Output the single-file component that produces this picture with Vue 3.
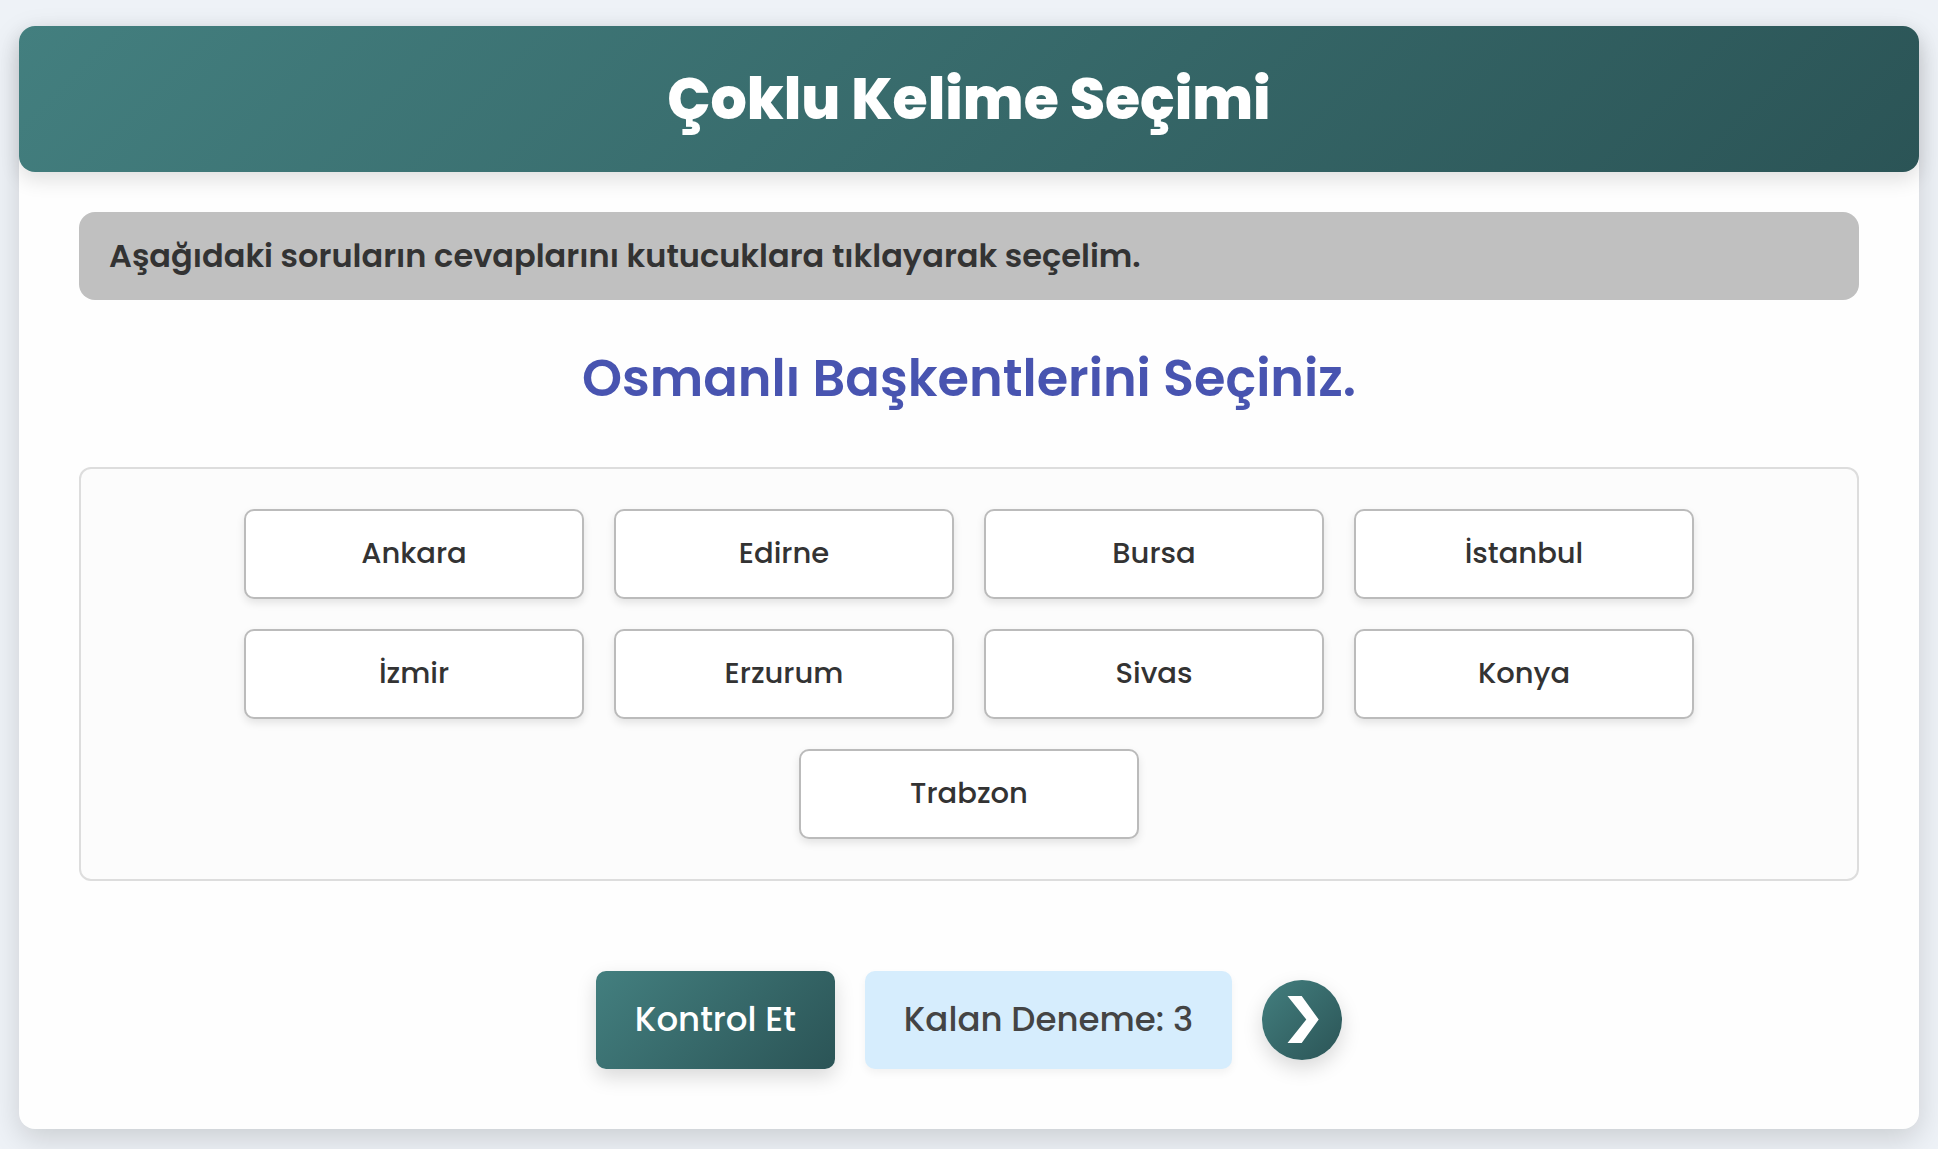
<script setup>
import { ref } from 'vue'

const words = ['Ankara', 'Edirne', 'Bursa', 'İstanbul', 'İzmir', 'Erzurum', 'Sivas', 'Konya', 'Trabzon']
const selected = ref([])
const attempts = ref(3)

function toggle(word) {
  selected.value = selected.value.includes(word)
    ? selected.value.filter((w) => w !== word)
    : [...selected.value, word]
}

function check() {
  if (attempts.value > 0) attempts.value--
}
</script>

<template>
  <main class="card">
    <header class="header">
      <h1>Çoklu Kelime Seçimi</h1>
    </header>
    <div class="content">
      <p class="instruction">Aşağıdaki soruların cevaplarını kutucuklara tıklayarak seçelim.</p>
      <h2>Osmanlı Başkentlerini Seçiniz.</h2>
      <div class="words">
        <button
          v-for="word in words"
          :key="word"
          type="button"
          class="word"
          :class="{ selected: selected.includes(word) }"
          :aria-pressed="selected.includes(word)"
          @click="toggle(word)"
        >{{ word }}</button>
      </div>
      <div class="actions">
        <button type="button" class="check" @click="check">Kontrol Et</button>
        <div class="attempts">Kalan Deneme: {{ attempts }}</div>
        <button type="button" class="next" aria-label="Sonraki">
          <svg viewBox="0 0 80 80" aria-hidden="true">
            <path d="M25.5 16H39.7L56.7 39.5L39.7 63H25.5L44.3 39.5Z" fill="#fff" />
          </svg>
        </button>
      </div>
    </div>
  </main>
</template>

<style>
body {
  margin: 0;
  background: #eef2f7;
}
</style>

<style scoped>
.card,
.card button {
  font-family: Poppins, Inter, "Noto Sans", sans-serif;
}

.card {
  margin: 26px 19px 20px;
  border-radius: 16px;
  background: #fefefe;
  color: #333;
  box-shadow: 0 10px 30px rgba(0, 0, 0, 0.15);
}

.header {
  padding: 32px;
  border-radius: 16px;
  background: linear-gradient(135deg, #437f7f, #2b5456);
  box-shadow: 0 8px 20px rgba(0, 0, 0, 0.12);
  color: #fff;
  text-align: center;
}

h1 {
  margin: 0;
  font-size: 57px;
  font-weight: 800;
  line-height: 82px;
}

.content {
  padding: 40px 60px 60px;
}

.instruction {
  margin: 0;
  padding: 20px 30px;
  border-radius: 16px;
  background: #c0c0c0;
  font-size: 32px;
  font-weight: 600;
  line-height: 48px;
}

h2 {
  margin: 40px 0 51px;
  color: #4854b0;
  font-size: 51px;
  font-weight: 600;
  line-height: 76px;
  text-align: center;
}

.words {
  display: flex;
  flex-wrap: wrap;
  justify-content: center;
  gap: 30px;
  padding: 40px;
  border: 2px solid #ddd;
  border-radius: 12px;
  background: #fcfcfc;
}

.word {
  box-sizing: border-box;
  width: 340px;
  padding: 21px 22px 23px;
  border: 2px solid #bbb;
  border-radius: 10px;
  background: #fff;
  box-shadow: 0 4px 8px rgba(0, 0, 0, 0.1);
  color: #333;
  font-size: 29px;
  font-weight: 500;
  line-height: 42px;
  cursor: pointer;
}

.word.selected {
  background: #d6edfd;
}

.actions {
  display: flex;
  align-items: center;
  justify-content: center;
  gap: 30px;
  margin-top: 90px;
}

.check,
.attempts {
  padding: 24px 39px 26px;
  border-radius: 10px;
  font-size: 34px;
  font-weight: 500;
  line-height: 48px;
}

.check,
.next {
  border: 0;
  background: linear-gradient(135deg, #437f7f, #2b5456);
  box-shadow: 0 8px 20px rgba(0, 0, 0, 0.15);
  color: #fff;
  cursor: pointer;
}

.attempts {
  background: #d6edfd;
  box-shadow: 0 4px 8px rgba(0, 0, 0, 0.05);
  color: #444;
}

.next {
  width: 80px;
  height: 80px;
  padding: 0;
  border-radius: 50%;
}

.next svg {
  display: block;
  width: 100%;
  height: 100%;
}
</style>
